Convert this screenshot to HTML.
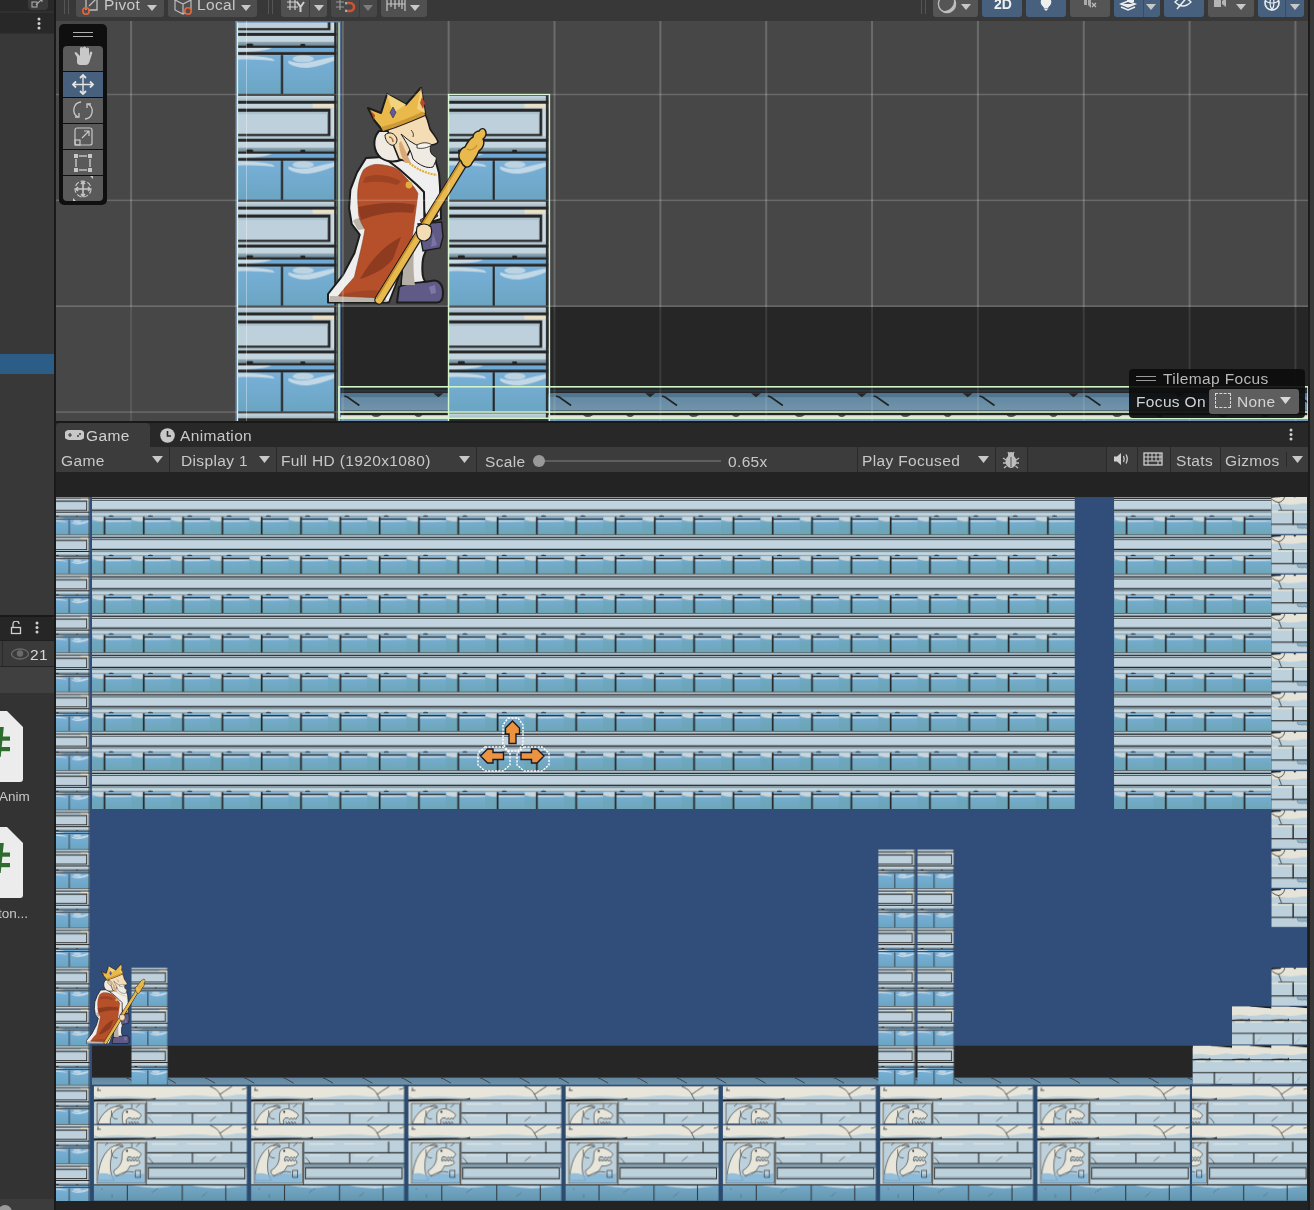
<!DOCTYPE html>
<html><head><meta charset="utf-8"><title>Unity</title>
<style>
html,body{margin:0;padding:0;width:1314px;height:1210px;overflow:hidden;background:#191919;font-family:"Liberation Sans",sans-serif;}
.a{position:absolute;box-sizing:border-box}
.t{position:absolute;color:#c4c4c4;font-size:14px;line-height:16px;white-space:nowrap;will-change:transform}
</style></head><body>

<div class="a" style="left:0;top:0;width:54px;height:1210px;background:#383838"></div>
<div class="a" style="left:0;top:0;width:54px;height:11px;background:#282828"></div>
<div class="a" style="left:28px;top:-4px;width:20px;height:14px;background:#3a3a3a;border-radius:0 0 4px 4px"></div>
<div class="a" style="left:0;top:11px;width:54px;height:2px;background:#303030"></div>
<div class="a" style="left:0;top:13px;width:54px;height:21px;background:#282828"></div>
<div class="a" style="left:0;top:33px;width:54px;height:1px;background:#2f2f2f"></div>
<div class="a" style="left:0;top:354px;width:54px;height:20px;background:#2c5d87"></div>
<div class="a" style="left:0;top:615px;width:54px;height:2px;background:#191919"></div>
<div class="a" style="left:0;top:617px;width:54px;height:23.5px;background:#262626;border-radius:0 4px 0 0"></div>
<div class="a" style="left:0;top:640px;width:54px;height:1px;background:#1f1f1f"></div>
<div class="a" style="left:0;top:641px;width:54px;height:25px;background:#3a3a3a"></div>
<div class="a" style="left:2px;top:641px;width:1px;height:25px;background:#2a2a2a"></div>
<div class="a" style="left:0;top:666px;width:54px;height:1px;background:#252525"></div>
<div class="a" style="left:0;top:667px;width:54px;height:26px;background:#404040"></div>
<div class="a" style="left:0;top:693px;width:54px;height:506px;background:#333333"></div>
<div class="a" style="left:0;top:1199px;width:54px;height:11px;background:#3c3c3c"></div>
<div class="a" style="left:54px;top:0;width:2px;height:1210px;background:#1a1a1a"></div>
<div class="a" style="left:56px;top:0;width:1258px;height:21px;background:#383838"></div>
<div class="a" style="left:56px;top:421px;width:1258px;height:2px;background:#191919"></div>
<div class="a" style="left:56px;top:423px;width:1258px;height:24px;background:#282828"></div>
<div class="a" style="left:56px;top:423px;width:94px;height:24px;background:#3c3c3c;border-radius:4px 4px 0 0"></div>
<div class="a" style="left:56px;top:447px;width:1258px;height:25px;background:#3c3c3c"></div>
<div class="a" style="left:56px;top:472px;width:1258px;height:25px;background:#232323"></div>
<div class="a" style="left:56px;top:1201px;width:1258px;height:9px;background:#232323"></div>
<div class="a" style="left:1307px;top:497px;width:7px;height:704px;background:#232323"></div>
<svg class="a" style="left:0;top:0" width="1314" height="1210">
<defs><linearGradient id="floorB" x1="0" y1="0" x2="0" y2="1"><stop offset="0" stop-color="#74a8c8"/><stop offset="1" stop-color="#6497ae"/></linearGradient>
<linearGradient id="ledgeG" x1="0" y1="0" x2="0" y2="1"><stop offset="0" stop-color="#c6d8e1"/><stop offset="1" stop-color="#a3b8c4"/></linearGradient>
<linearGradient id="grayG" x1="0" y1="0" x2="0" y2="1"><stop offset="0" stop-color="#93a9b5"/><stop offset="1" stop-color="#6e8b9c"/></linearGradient>
<linearGradient id="brickW" x1="0" y1="0" x2="0" y2="1"><stop offset="0" stop-color="#74acd0"/><stop offset="1" stop-color="#6ea6b6"/></linearGradient>
<linearGradient id="brickG" x1="0" y1="0" x2="0" y2="1"><stop offset="0" stop-color="#78b0d9"/><stop offset="1" stop-color="#6ba5c2"/></linearGradient>
<pattern id="colG" patternUnits="userSpaceOnUse" x="92.0" y="495.0" width="39.31" height="39.31">
<rect x="0" y="0" width="36.8" height="39.31" fill="#bccfda"/>
<rect x="0" y="0" width="36.8" height="0.75" fill="#262626"/>
<rect x="0" y="0.75" width="36.8" height="1.9" fill="url(#ledgeG)"/>
<rect x="0" y="2.6" width="36.8" height="1.1" fill="#262626"/>
<rect x="0" y="3.7" width="36.8" height="1.8" fill="#c2d4de"/>
<rect x="28" y="3.7" width="8" height="1.6" fill="#e9e1c7"/>
<rect x="0" y="5.5" width="34.7" height="10.3" fill="#262626"/>
<rect x="0" y="6.7" width="33.6" height="8.2" fill="#bdd0dc"/>
<rect x="0" y="6.7" width="33.6" height="0.8" fill="#a9bfcb"/>
<rect x="34.7" y="5.5" width="1.5" height="10.3" fill="#c9dae3"/>
<rect x="0" y="15.8" width="36.8" height="0.9" fill="#b4c8d3"/>
<rect x="0" y="16.7" width="36.8" height="1.1" fill="#262626"/>
<rect x="0" y="17.8" width="36.8" height="2.2" fill="#c3d5df"/>
<rect x="0" y="20" width="36.8" height="1.6" fill="url(#grayG)"/>
<rect x="0" y="22.2" width="36.8" height="1.6" fill="#6fa9d6"/>
<path d="M0 22.2 h13 q-3 1.6 -13 1.6z" fill="#c8d9e3"/>
<rect x="0" y="21.4" width="36.8" height="0.85" fill="#262626"/>
<rect x="3.3" y="20.7" width="2.6" height="0.9" rx="0.4" fill="#222"/>
<rect x="23.4" y="20.8" width="1.9" height="0.8" rx="0.4" fill="#222"/>
<rect x="0" y="23.8" width="36.8" height="1.1" fill="#262626"/>
<rect x="0" y="24.9" width="36.8" height="14.410000000000004" fill="url(#brickG)"/>
<path d="M0 25 q8 0 13 1.2 l1 1 q-6 -0.8 -14 -0.6z" fill="#c5d8e4"/>
<path d="M19 27 q4 1.5 8 0.5 q4 -1 9 -2 v1.5 q-5 2 -9 2.6 q-5 0.4 -8 -1.6z" fill="#c3d8e6"/>
<ellipse cx="24.5" cy="26.3" rx="4" ry="1.3" fill="#bcd3e2"/>
<rect x="16.2" y="24.9" width="0.8" height="14.410000000000004" fill="#262626"/>
<rect x="36" y="0" width="0.8" height="39.31" fill="#262626"/>
</pattern>
<pattern id="colS" patternUnits="userSpaceOnUse" width="39.31" height="39.31" patternTransform="translate(237.3 93.8) scale(2.6927)">
<rect x="0" y="0" width="36.8" height="39.31" fill="#bccfda"/>
<rect x="0" y="0" width="36.8" height="0.75" fill="#262626"/>
<rect x="0" y="0.75" width="36.8" height="1.9" fill="url(#ledgeG)"/>
<rect x="0" y="2.6" width="36.8" height="1.1" fill="#262626"/>
<rect x="0" y="3.7" width="36.8" height="1.8" fill="#c2d4de"/>
<rect x="28" y="3.7" width="8" height="1.6" fill="#e9e1c7"/>
<rect x="0" y="5.5" width="34.7" height="10.3" fill="#262626"/>
<rect x="0" y="6.7" width="33.6" height="8.2" fill="#bdd0dc"/>
<rect x="0" y="6.7" width="33.6" height="0.8" fill="#a9bfcb"/>
<rect x="34.7" y="5.5" width="1.5" height="10.3" fill="#c9dae3"/>
<rect x="0" y="15.8" width="36.8" height="0.9" fill="#b4c8d3"/>
<rect x="0" y="16.7" width="36.8" height="1.1" fill="#262626"/>
<rect x="0" y="17.8" width="36.8" height="2.2" fill="#c3d5df"/>
<rect x="0" y="20" width="36.8" height="1.6" fill="url(#grayG)"/>
<rect x="0" y="22.2" width="36.8" height="1.6" fill="#6fa9d6"/>
<path d="M0 22.2 h13 q-3 1.6 -13 1.6z" fill="#c8d9e3"/>
<rect x="0" y="21.4" width="36.8" height="0.85" fill="#262626"/>
<rect x="3.3" y="20.7" width="2.6" height="0.9" rx="0.4" fill="#222"/>
<rect x="23.4" y="20.8" width="1.9" height="0.8" rx="0.4" fill="#222"/>
<rect x="0" y="23.8" width="36.8" height="1.1" fill="#262626"/>
<rect x="0" y="24.9" width="36.8" height="14.410000000000004" fill="url(#brickG)"/>
<path d="M0 25 q8 0 13 1.2 l1 1 q-6 -0.8 -14 -0.6z" fill="#c5d8e4"/>
<path d="M19 27 q4 1.5 8 0.5 q4 -1 9 -2 v1.5 q-5 2 -9 2.6 q-5 0.4 -8 -1.6z" fill="#c3d8e6"/>
<ellipse cx="24.5" cy="26.3" rx="4" ry="1.3" fill="#bcd3e2"/>
<rect x="16.2" y="24.9" width="0.8" height="14.410000000000004" fill="#262626"/>
<rect x="36" y="0" width="0.8" height="39.31" fill="#262626"/>
</pattern>
<pattern id="wallG" patternUnits="userSpaceOnUse" x="92.0" y="495.0" width="39.31" height="39.31">
<rect x="0" y="0" width="39.31" height="39.31" fill="#bdd1db"/>
<rect x="0" y="0" width="39.31" height="0.8" fill="#262a2c"/>
<rect x="0" y="0.8" width="39.31" height="1.9" fill="url(#ledgeG)"/>
<rect x="0" y="2.7" width="39.31" height="1.3" fill="#232323"/>
<rect x="0" y="4.0" width="39.31" height="1.0" fill="#c0d3dd"/>
<rect x="0" y="5.0" width="39.31" height="1.0" fill="#3e4c55"/>
<rect x="0" y="6.0" width="39.31" height="8.5" fill="#c0d3de"/>
<rect x="0" y="6.0" width="39.31" height="1.0" fill="#c8dae4"/>
<rect x="0" y="14.5" width="39.31" height="1.5" fill="#272a2c"/>
<rect x="0" y="16.0" width="39.31" height="1.2" fill="#8aa0ad"/>
<rect x="0" y="17.2" width="39.31" height="0.8" fill="#5f7580"/>
<rect x="0" y="18.0" width="39.31" height="2.6" fill="#c3d6e0"/>
<rect x="0" y="20.6" width="39.31" height="1.3" fill="#8ea3ae"/>
<path d="M16.7 21.4 q2 -1.5 4.9 0 z" fill="#222" stroke="#222" stroke-width="0.6"/>
<rect x="0" y="21.9" width="39.31" height="5.1" fill="#79afd6"/>
<path d="M0.5 21.9 h11.5 v4.5 q-5 1 -11.5 -1.5z" fill="#c9d6dc"/>
<rect x="12.4" y="23.6" width="26.910000000000004" height="1.4" fill="#262626"/>
<path d="M13 25 h26.310000000000002 v1 q-12 1.2 -26.310000000000002 1.2z" fill="#c5dbe8"/>
<rect x="0" y="27" width="39.31" height="12.310000000000002" fill="url(#brickW)"/>
<rect x="0" y="26.4" width="12" height="12.910000000000004" fill="#6aa4b4" opacity="0.55"/>
<rect x="11.6" y="21.9" width="1.7" height="17.410000000000004" fill="#262626"/>
</pattern>
<pattern id="snowG" patternUnits="userSpaceOnUse" x="92.0" y="495.0" width="39.31" height="39.31">
<rect x="0" y="0" width="37" height="39.31" fill="#bdd1dc"/>
<rect x="0" y="0" width="37" height="1.1" fill="#2c4a70"/>
<path d="M0 1.1 h37 v7.5 q-6 -1 -10 0.6 q-8 1 -14 -0.2 q-7 -0.5 -13 0.4z" fill="#e6e4d8"/>
<path d="M0 1.1 h10 l-1 1.2 q-5 -0.2 -9 0.6z M22 1.1 h3 l-1.5 1.6z" fill="#222"/>
<path d="M0.3 4 q4 3.5 7.1 3.4 q5 -1 6.1 -6.3 M7.4 7.4 L10.3 15" stroke="#222" stroke-width="0.75" fill="none"/>
<path d="M7 15.1 h16 v0.9 h-16z" fill="#222"/>
<rect x="23" y="15.1" width="14" height="0.8" fill="#8fa9b6"/>
<rect x="0" y="15.9" width="37" height="1.8" fill="#dde0d8"/>
<rect x="21.1" y="15.9" width="1.4" height="13.9" fill="#222"/>
<rect x="0" y="28.7" width="37" height="1.1" fill="#262626"/>
<path d="M26 29.8 h11 v3 q-2 1.5 -4 0 q-2 1.6 -4 0 q-2 1.4 -3 -1z" fill="#8fb3c9" stroke="#333" stroke-width="0.3"/>
<rect x="0" y="39.05" width="37" height="0.26" fill="#2c4a70"/>
</pattern>
<pattern id="stairG" patternUnits="userSpaceOnUse" x="92.0" y="495.0" width="39.31" height="39.31">
<rect x="0" y="0" width="39.31" height="39.31" fill="#bdd1dc"/>
<path d="M0 0 h39.31 v8.6 q-6 -1.2 -12 0.6 q-8 1.5 -14 -0.2 q-7 -1 -13.310000000000002 0.4z" fill="#e6e4d8"/>
<path d="M18 0 L39.31 0 L39.31 2.6 L38 2.2 Q30 1.4 18 0.4 Z" fill="#1e1e1e"/>
<path d="M0 13.8 q8 -0.8 16 -0.2 l1.5 -1.4 l0.3 1.7 h21.51 v1.2 h-39.31 z" fill="#222"/>
<path d="M3 15.3 h10 v1.4 q-5 0.5 -10 0z M18 15.3 h12 v1.2 q-6 0.5 -12 0z" fill="#e2e2d8"/>
<rect x="0" y="26.8" width="39.31" height="1.0" fill="#262626"/>
<rect x="21.1" y="26.8" width="1.2" height="11.7" fill="#262626"/>
<path d="M24 37 l5 -5" stroke="#333" stroke-width="0.45" stroke-dasharray="1 1"/>
<rect x="0" y="38.5" width="39.31" height="0.81" fill="#2c4a70"/>
</pattern>
<pattern id="floorG" patternUnits="userSpaceOnUse" x="92.0" y="1084.4" width="157.24" height="130">
<rect x="0" y="0" width="157.24" height="120" fill="#2c4a6e"/>
<rect x="1.3" y="1.9" width="154" height="114.3" fill="#bdd1dc"/>
<g id="fRowA">
<path d="M1.3 1.9 h154 v8.5 q-8 -1.2 -16 0.8 q-12 2 -26 0.2 q-16 -1.6 -32 1 q-18 2.2 -36 0.2 q-14 -1.2 -26 -0.6 q-10 0.8 -18 2.4z" fill="#e8e6da"/>
<path d="M1.3 12.5 q4 1 8 3" stroke="#9ab8cc" stroke-width="1" fill="none"/>
<path d="M1.3 15.4 h154 v1.2 h-154z" fill="#262626"/>
<path d="M1.3 15 q30 -0.8 50 -0.3 q10 0.2 12 -1.2 l0.5 1.6 q-30 1.8 -62.5 2.2z" fill="#1e1e1e"/>
<path d="M118 2 q8 3 10 8 q2 4 3 5.6 M128 10 q4 -3 12 -8 M150 5 q3 0 5 -2" stroke="#222" stroke-width="0.7" fill="none"/>
<path d="M6 3 v3 M5 6 h4" stroke="#222" stroke-width="0.7"/>
</g>
<use href="#fRowA" y="38.9"/>
<!-- row A stones -->
<rect x="3.4" y="17.4" width="51.2" height="22.5" fill="#dcdcd2"/>
<rect x="5" y="19" width="48" height="21" fill="#bdd1dc" stroke="#2a2a2a" stroke-width="0.6"/>
<path d="M6 39.6 C8 32 14 25 22 22.5 C26 21.5 29 22 31 23.5 C26 23.5 22 26 20 30 C18 34 18 37 18.5 39.6 Z" fill="#e8e6da" stroke="#222" stroke-width="0.6"/>
<path d="M19.5 26 C19 32 21 35 25.5 34.5 M24 22 C28 20 30 21 31.5 22.5" stroke="#222" stroke-width="0.6" fill="none"/>
<path d="M31 27.5 C33 25 36 24.2 39 24.5 C42 25 45 26.5 48.5 29.5 C49.5 31 49 32.5 47.5 33 L46.5 35 L45 33.3 L43.5 35.2 L42 33.4 L40.5 35.2 L39 33.5 L36 33.5 L34 36 L34.5 39.6 L31 39.6 C30 35 30 31 31 27.5 Z" fill="#e8e6da" stroke="#222" stroke-width="0.6"/>
<path d="M36.5 37 L38 39.6 L39.5 37.2 L41 39.6 L42.5 37.2 L44 39.6 L45.5 37.4 L47 39.6" stroke="#222" stroke-width="0.6" fill="#e8e6da"/>
<circle cx="35" cy="27.5" r="1" fill="#222"/>
<path d="M39.8 19.5 V24 M44 23 L48 19.5 M13 22 L16 19.5" stroke="#222" stroke-width="0.6"/>
<path d="M56 33 q3 2 5 6" stroke="#222" stroke-width="0.6" fill="none"/>
<rect x="55" y="28" width="100.3" height="1.2" fill="#262626"/>
<rect x="138.8" y="17.4" width="1.1" height="10.6" fill="#262626"/>
<rect x="99.9" y="29.2" width="1.1" height="10.4" fill="#262626"/>
<rect x="54" y="17.4" width="1" height="22.2" fill="#333"/>
<path d="M60 19 h25 v1.2 h-25z M95 19 h30 v1 h-30z M60 30.5 h20 v1 h-20z M105 30.5 h25 v1 h-25z" fill="#dfe6e4"/>
<path d="M118 37 l6 -5" stroke="#222" stroke-width="0.5" fill="none"/>
<rect x="0" y="39.6" width="157.24" height="1.2" fill="#2c4a6e"/>
<!-- row B stones -->
<rect x="3.4" y="56.5" width="51.2" height="44" fill="#dcdcd2"/>
<rect x="5" y="58.2" width="48" height="40.6" fill="#bdd1dc" stroke="#2a2a2a" stroke-width="0.6"/>
<path d="M6 96 C6 80 12 66 22 61.5 C26 60.5 29 61 31 62.5 C26 62.5 21 66 19.5 72 C17.5 80 18 90 22 96 Z" fill="#e8e6da" stroke="#222" stroke-width="0.6"/>
<path d="M19.5 65 C19 71 21 74 25.5 73.5 M24 61 C28 59 30 60 31.5 61.5" stroke="#222" stroke-width="0.6" fill="none"/>
<path d="M31 66.5 C33 64 36 63.2 39 63.5 C42 64 45 65.5 48.5 68.5 C49.5 70 49 71.5 47.5 72 L46.5 74 L45 72.3 L43.5 74.2 L42 72.4 L40.5 74.2 L39 72.5 L36 72.5 L35 76 L36 77 L37.5 75 L39 77 L40.5 75 L42 77 L43.5 75 L45 77 L46.5 75.5 L48 78.5 C46 81 42 82 38 81.5 C36 86 32 90 28 91 C24 92 21 90 22 86 C26 84 29 80 30 75 C30 72 30 69 31 66.5 Z" fill="#e8e6da" stroke="#222" stroke-width="0.6"/>
<circle cx="35" cy="66.5" r="1" fill="#222"/>
<path d="M39.8 58.5 V63 M44 62 L48 58.5 M13 61 L16 58.5" stroke="#222" stroke-width="0.6"/>
<path d="M5.5 90 C14 86 22 94 30 90 C38 87 44 92 52.5 89 V98.5 H5.5 Z" fill="#7fb4d8" opacity="0.8"/>
<path d="M24 92 C30 88 36 86 42 88" stroke="#222" stroke-width="0.6" fill="none"/>
<rect x="43.5" y="86" width="5" height="7" fill="none" stroke="#222" stroke-width="0.6"/>
<path d="M56 73 q3 2 5 6" stroke="#222" stroke-width="0.6" fill="none"/>
<rect x="55" y="67.8" width="100.3" height="1.2" fill="#262626"/>
<rect x="138.8" y="57.2" width="1.1" height="10.6" fill="#262626"/>
<rect x="99.9" y="69" width="1.1" height="9.6" fill="#262626"/>
<rect x="54" y="57.2" width="1" height="43" fill="#333"/>
<path d="M60 59 h25 v1.2 h-25z M95 59 h30 v1 h-30z M60 70.5 h20 v1 h-20z M105 70.5 h25 v1 h-25z" fill="#dfe6e4"/>
<path d="M118 77 l6 -5" stroke="#222" stroke-width="0.5" fill="none"/>
<rect x="55" y="78.6" width="100.3" height="1.2" fill="#262626"/>
<rect x="55" y="79.8" width="100.3" height="3.8" fill="url(#grayG)"/>
<rect x="56.4" y="83.6" width="96.3" height="11" fill="#bdd1dc" stroke="#262626" stroke-width="0.9"/>
<rect x="57" y="92.5" width="95" height="1.6" fill="#8ea4b0"/>
<rect x="55" y="95.5" width="100.3" height="4.4" fill="#c4d6df"/>
<rect x="1.3" y="99.9" width="154" height="1.2" fill="#262626"/>
<rect x="1.3" y="101.1" width="154" height="15.1" fill="url(#floorB)"/>
<path d="M40 101.1 q20 4 40 1 v-0 z M100 101.1 q20 5 50 1z" fill="#c5d9e6"/>
<path d="M35.3 101.1 v15 M90.3 101.1 v15 M133.8 101.1 v15" stroke="#262626" stroke-width="0.9"/>
<path d="M10 104 v2 M20 110 v3 M60 108 l6 -4 M110 112 l5 -4" stroke="#222" stroke-width="0.5" stroke-dasharray="1 1"/>
<rect x="0" y="0" width="1.9" height="120" fill="#2c4a6e"/>
<rect x="154.8" y="0" width="2.5" height="120" fill="#2c4a6e"/>
</pattern>
<pattern id="floorG2" href="#floorG" patternUnits="userSpaceOnUse" x="52.69" y="1084.4" width="157.24" height="130"></pattern>
<linearGradient id="iceG" x1="0" y1="0" x2="0" y2="1"><stop offset="0" stop-color="#5f86a3"/><stop offset="1" stop-color="#7294a9"/></linearGradient>
<symbol id="king" viewBox="0 0 160 218">
<g stroke="#1c1c1c" stroke-width="2" stroke-linejoin="round">
<!-- legs -->
<path d="M78 148 L101 150 L101 160 C96 168 95 174 95.4 184 C95.4 190 97 194 100 196 L74 200 Z" fill="#ececec"/>
<!-- shoes -->
<path d="M72 200 C80 195 95 196 104 194 C112 192 116 198 116 206 C116 212 114 215.5 110 215.5 L70 215.5 Z" fill="#5f5a86"/>
<!-- chest -->
<path d="M56 68 L84 62 L108 72 L112 86 L113 100 L114 132 L100 136 L96 120 L90 106 L72 84 Z" fill="#efefef"/>
<!-- back fur base -->
<path d="M39 71 L30 85.5 L23.4 102.7 L22.1 121.2 L24.7 137 L32.7 147.7 L27.4 166.2 L15.5 188.7 L1 207 L1 215.5 L62 215.5 L68 200 L86 150 L97.5 142 L97 105 L90 98 L72 82 L56 70 Z" fill="#eeeeee"/>
</g>
<path d="M3 209 L58 210 L60 215 L2 215 Z" fill="#bdb6ac"/>
<path d="M26 134 C30 130 36 131 40 134 L38 142 L31 143 Z" fill="#bdb6ac"/>
<path d="M75 198 L79 150 L88 150 C86 170 86 186 88 198 Z" fill="#b5aea4"/>
<!-- red cape -->
<path d="M36.6 82.8 C42 78 48 77 51.2 77.5 C60 78 68 80 72.4 84 C80 92 88 100 90.9 106.6 L85.6 147.7 C76 172 66 194 57 211 L11.5 209 C18 200 24 194 27.4 190 C32 170 36 155 38 142.4 C34 136 31 130 31.4 122.5 C30 108 30 95 36.6 82.8 Z" fill="#b5502b" stroke="#8a3a1e" stroke-width="0.6"/>
<path d="M31 120 C50 116 70 114 88 118 L86 126 C70 124 52 126 34 133 Z" fill="#8e3b20"/>
<path d="M33 192 C44 172 58 158 74 150 L66 172 C58 182 46 188 33 192 Z" fill="#8e3b20"/>
<path d="M38 90 C50 86 62 88 74 94 L70 98 C58 94 48 94 36 96 Z" fill="#8e3b20" opacity="0.6"/>
<path d="M12 208 C28 204 44 202 58 204 L57 211 L11.5 209 Z" fill="#8e3b20" opacity="0.5"/>
<!-- purple skirt -->
<path d="M91 137 L114.7 135 L116 150 L113 161 L96 164 Z" fill="#5f5a86" stroke="#1c1c1c" stroke-width="1.4"/>
<path d="M106 146 L110 158 L104 160 Z" fill="#7a74a6"/>
<!-- sash -->
<path d="M93 133 L108 124 L111 129 L96 139 Z" fill="#b5502b" stroke="#1c1c1c" stroke-width="0.8"/>
<path d="M102 200 L108 198 L109 206 L104 207 Z" fill="#7d78aa"/>
<!-- chain & clasp -->
<path d="M78 72 C86 80 96 86 110 88" stroke="#e2ac3a" stroke-width="2.2" fill="none" stroke-dasharray="2 1"/>
<circle cx="82" cy="98" r="3.4" fill="#e4ad3c"/>
<!-- beard & hair -->
<path d="M52 44 C45 52 46 64 54 71 C60 75 68 75 74 73 L72 60 L62 44 Z" fill="#efebe3" stroke="#1c1c1c" stroke-width="2"/>
<!-- face -->
<path d="M60 42 L98 27 C101 33 102 38 103 42 C106 47 110 51 111 55 C110 57 106 58 104 58 L102 60 C96 62 90 60 86 58 C82 64 80 70 78 74 L72 72 C68 62 64 52 60 42 Z" fill="#f4dcb5" stroke="#1c1c1c" stroke-width="1.6"/>
<path d="M74 54 C78 62 80 68 84 76 L78 76 C74 70 72 62 72 56 Z" fill="#d9a877"/>
<path d="M74 47 C80 56 84 64 86 72 C92 78 100 82 106 80 C108 76 110 72 109 70 C104 68 102 64 104 58 C98 60 92 60 86 56 C82 54 78 50 74 47 Z" fill="#efebe3" stroke="#1c1c1c" stroke-width="1"/>
<!-- ear -->
<path d="M58 48 C62 44 68 46 70 52 C70 57 67 59 64 58 C60 56 58 52 58 48 Z" fill="#f4dcb5" stroke="#1c1c1c" stroke-width="1"/>
<path d="M62 50 C64 50 66 52 66 55" stroke="#a5643a" stroke-width="1.5" fill="none"/>
<path d="M84 43 C86 45 87 47 86 50" stroke="#1c1c1c" stroke-width="0.8" fill="none"/>
<!-- moustache -->
<path d="M90 58 C95 55 101 55 105 58 C100 61 95 62 90 61 Z" fill="#f4f2ec" stroke="#1c1c1c" stroke-width="0.8"/>
<!-- crown -->
<path d="M41 21 L54 26 L60 7 L79 17.5 L94 0.5 L98 26 L98 28 C84 34 70 40 56 44 L47 33 Z" fill="#e9b94b" stroke="#1c1c1c" stroke-width="2" stroke-linejoin="round"/>
<path d="M56 44 C70 40 84 34 98 28 L97 24 C84 30 70 36 54 40 Z" fill="#cf9a35"/>
<path d="M60 7 L66 26 L79 17.5 Z M94 0.5 L90 22 L98 26Z" fill="#f3d27e"/>
<path d="M66 20 L69 25.5 L66 31 L63 25.5 Z" fill="#5f5a9a" stroke="#2a2a50" stroke-width="0.6"/>
<path d="M95 10 L98 16 L96 22 L93 16 Z" fill="#b84a2a"/>
<path d="M44 24 L48 28 L47 33 Z" fill="#b84a2a"/>
<!-- staff -->
<path d="M52 213 L140 70" stroke="#1c1c1c" stroke-width="9.5" stroke-linecap="round"/>
<path d="M52 213 L140 70" stroke="#e8b94c" stroke-width="7" stroke-linecap="round"/>
<path d="M49.5 211.5 L137.5 68.5" stroke="#c8902c" stroke-width="1.6"/>
<path d="M134 74 C130 70 132 62 138 60 C140 56 142 52 146 50 C146 46 150 44 152 44 C154 41 157 41 158 43 C160 46 159 50 156 52 C158 56 156 62 152 64 C150 70 146 74 144 78 C140 82 136 80 134 74 Z" fill="#e8b94c" stroke="#1c1c1c" stroke-width="1.4"/>
<path d="M140 62 C144 64 148 62 150 58" stroke="#c8902c" stroke-width="1.2" fill="none"/>
<!-- hand -->
<path d="M90 140 C94 136 100 136 104 140 C106 146 104 152 98 154 C92 154 88 150 90 140 Z" fill="#f4dcb5" stroke="#1c1c1c" stroke-width="1.2"/>
</symbol>

</defs>
<clipPath id="scClip"><rect x="56" y="21" width="1258" height="400"/></clipPath>
<g clip-path="url(#scClip)">
<rect x="56" y="21" width="1258" height="400" fill="#474747"/>
<rect x="339" y="306.8" width="975" height="116" fill="#262626"/>
<rect x="339" y="390.5" width="975" height="0.8" fill="#2e4a60"/>
<rect x="339" y="393.3" width="975" height="17.5" fill="url(#iceG)"/>
<rect x="339" y="393.3" width="975" height="3.8" fill="#52768f"/>
<rect x="339" y="410.8" width="975" height="4.4" fill="#262626"/>
<rect x="339" y="415.2" width="975" height="3.1" fill="#e6e4d8"/>
<rect x="339" y="418.3" width="975" height="3" fill="#6f8fb8"/>
<path d="M344.4 396 l3 1 l12 8.5" stroke="#222" stroke-width="1.6" fill="none"/>
<path d="M433.4 393.3 l5 4 l5 -4z" fill="#262626"/>
<path d="M371.4 415.2 q4 3 10 0z M414.4 415.2 q4 3 8 0z" fill="#262626"/>
<path d="M450.3 396 l3 1 l12 8.5" stroke="#222" stroke-width="1.6" fill="none"/>
<path d="M539.3 393.3 l5 4 l5 -4z" fill="#262626"/>
<path d="M477.3 415.2 q4 3 10 0z M520.3 415.2 q4 3 8 0z" fill="#262626"/>
<path d="M556.1 396 l3 1 l12 8.5" stroke="#222" stroke-width="1.6" fill="none"/>
<path d="M645.1 393.3 l5 4 l5 -4z" fill="#262626"/>
<path d="M583.1 415.2 q4 3 10 0z M626.1 415.2 q4 3 8 0z" fill="#262626"/>
<path d="M662.0 396 l3 1 l12 8.5" stroke="#222" stroke-width="1.6" fill="none"/>
<path d="M751.0 393.3 l5 4 l5 -4z" fill="#262626"/>
<path d="M689.0 415.2 q4 3 10 0z M732.0 415.2 q4 3 8 0z" fill="#262626"/>
<path d="M767.8 396 l3 1 l12 8.5" stroke="#222" stroke-width="1.6" fill="none"/>
<path d="M856.8 393.3 l5 4 l5 -4z" fill="#262626"/>
<path d="M794.8 415.2 q4 3 10 0z M837.8 415.2 q4 3 8 0z" fill="#262626"/>
<path d="M873.7 396 l3 1 l12 8.5" stroke="#222" stroke-width="1.6" fill="none"/>
<path d="M962.7 393.3 l5 4 l5 -4z" fill="#262626"/>
<path d="M900.7 415.2 q4 3 10 0z M943.7 415.2 q4 3 8 0z" fill="#262626"/>
<path d="M979.5 396 l3 1 l12 8.5" stroke="#222" stroke-width="1.6" fill="none"/>
<path d="M1068.5 393.3 l5 4 l5 -4z" fill="#262626"/>
<path d="M1006.5 415.2 q4 3 10 0z M1049.5 415.2 q4 3 8 0z" fill="#262626"/>
<path d="M1085.4 396 l3 1 l12 8.5" stroke="#222" stroke-width="1.6" fill="none"/>
<path d="M1174.4 393.3 l5 4 l5 -4z" fill="#262626"/>
<path d="M1112.4 415.2 q4 3 10 0z M1155.4 415.2 q4 3 8 0z" fill="#262626"/>
<path d="M1191.2 396 l3 1 l12 8.5" stroke="#222" stroke-width="1.6" fill="none"/>
<path d="M1280.2 393.3 l5 4 l5 -4z" fill="#262626"/>
<path d="M1218.2 415.2 q4 3 10 0z M1261.2 415.2 q4 3 8 0z" fill="#262626"/>
<path d="M1297.1 396 l3 1 l12 8.5" stroke="#222" stroke-width="1.6" fill="none"/>
<path d="M1386.1 393.3 l5 4 l5 -4z" fill="#262626"/>
<path d="M1324.1 415.2 q4 3 10 0z M1367.1 415.2 q4 3 8 0z" fill="#262626"/>
<rect x="237.3" y="21" width="102" height="400" fill="url(#colS)"/>
<rect x="449" y="94.5" width="102" height="327" fill="url(#colS)"/>
<rect x="236" y="19" width="104" height="405" fill="none" stroke="#5a7bb0" stroke-width="1.5"/>
<rect x="237.5" y="19" width="101.5" height="405" fill="none" stroke="#d0f5c8" stroke-width="1.3"/>
<rect x="235" y="21" width="105" height="1.5" fill="#5a7bb0"/>
<rect x="448.5" y="94.5" width="101" height="330" fill="none" stroke="#d0f5c8" stroke-width="1.3"/>
<rect x="339" y="386.8" width="969" height="31.5" fill="none" stroke="#d0f5c8" stroke-width="1.6"/>
<rect x="339" y="411.2" width="969" height="1.6" fill="#d0f5c8"/>
<rect x="246" y="21" width="1" height="400" fill="#fff" opacity="0.35"/>
<use href="#king" x="327" y="87" width="160" height="218"/>
<rect x="130.10" y="21" width="2" height="285.5" fill="#fff" opacity="0.2"/>
<rect x="130.10" y="306.5" width="2" height="115" fill="#fff" opacity="0.1"/>
<rect x="235.95" y="21" width="2" height="285.5" fill="#fff" opacity="0.2"/>
<rect x="235.95" y="306.5" width="2" height="115" fill="#fff" opacity="0.1"/>
<rect x="341.80" y="21" width="2" height="285.5" fill="#fff" opacity="0.2"/>
<rect x="341.80" y="306.5" width="2" height="115" fill="#fff" opacity="0.1"/>
<rect x="447.65" y="21" width="2" height="285.5" fill="#fff" opacity="0.2"/>
<rect x="447.65" y="306.5" width="2" height="115" fill="#fff" opacity="0.1"/>
<rect x="553.50" y="21" width="2" height="285.5" fill="#fff" opacity="0.2"/>
<rect x="553.50" y="306.5" width="2" height="115" fill="#fff" opacity="0.1"/>
<rect x="659.35" y="21" width="2" height="285.5" fill="#fff" opacity="0.2"/>
<rect x="659.35" y="306.5" width="2" height="115" fill="#fff" opacity="0.1"/>
<rect x="765.20" y="21" width="2" height="285.5" fill="#fff" opacity="0.2"/>
<rect x="765.20" y="306.5" width="2" height="115" fill="#fff" opacity="0.1"/>
<rect x="871.05" y="21" width="2" height="285.5" fill="#fff" opacity="0.2"/>
<rect x="871.05" y="306.5" width="2" height="115" fill="#fff" opacity="0.1"/>
<rect x="976.90" y="21" width="2" height="285.5" fill="#fff" opacity="0.2"/>
<rect x="976.90" y="306.5" width="2" height="115" fill="#fff" opacity="0.1"/>
<rect x="1082.75" y="21" width="2" height="285.5" fill="#fff" opacity="0.2"/>
<rect x="1082.75" y="306.5" width="2" height="115" fill="#fff" opacity="0.1"/>
<rect x="1188.60" y="21" width="2" height="285.5" fill="#fff" opacity="0.2"/>
<rect x="1188.60" y="306.5" width="2" height="115" fill="#fff" opacity="0.1"/>
<rect x="1294.45" y="21" width="2" height="285.5" fill="#fff" opacity="0.2"/>
<rect x="1294.45" y="306.5" width="2" height="115" fill="#fff" opacity="0.1"/>
<rect x="56" y="93.75" width="1258" height="1.5" fill="#fff" opacity="0.19"/>
<rect x="56" y="199.60" width="1258" height="1.5" fill="#fff" opacity="0.19"/>
<rect x="56" y="305.45" width="1258" height="1.5" fill="#fff" opacity="0.22"/>
<rect x="56" y="411.30" width="283" height="1.5" fill="#fff" opacity="0.19"/>
<rect x="339" y="411.30" width="975" height="1.5" fill="#fff" opacity="0.1"/>
</g>
<clipPath id="gmClip"><rect x="56" y="497" width="1251" height="704"/></clipPath>
<g clip-path="url(#gmClip)">
<rect x="56" y="497" width="1251" height="704" fill="#314d79"/>
<rect x="92.0" y="497" width="982.75" height="312" fill="url(#wallG)"/>
<rect x="1114.06" y="497" width="157.24" height="312" fill="url(#wallG)"/>
<rect x="52" y="497" width="40" height="704" fill="url(#colG)"/>
<rect x="1271.30" y="497" width="37" height="430.41" fill="url(#snowG)"/>
<rect x="92.0" y="1045.7" width="1100.68" height="32" fill="#262626"/>
<rect x="92.0" y="1077.7" width="1100.68" height="7.5" fill="url(#iceG)"/>
<path d="M126.5 1078.2 l2 0.4 l8 4.6" stroke="#333" stroke-width="0.8" fill="none"/>
<path d="M165.8 1078.2 l2 0.4 l8 4.6" stroke="#333" stroke-width="0.8" fill="none"/>
<path d="M205.1 1078.2 l2 0.4 l8 4.6" stroke="#333" stroke-width="0.8" fill="none"/>
<path d="M244.4 1078.2 l2 0.4 l8 4.6" stroke="#333" stroke-width="0.8" fill="none"/>
<path d="M283.7 1078.2 l2 0.4 l8 4.6" stroke="#333" stroke-width="0.8" fill="none"/>
<path d="M323.1 1078.2 l2 0.4 l8 4.6" stroke="#333" stroke-width="0.8" fill="none"/>
<path d="M362.4 1078.2 l2 0.4 l8 4.6" stroke="#333" stroke-width="0.8" fill="none"/>
<path d="M401.7 1078.2 l2 0.4 l8 4.6" stroke="#333" stroke-width="0.8" fill="none"/>
<path d="M441.0 1078.2 l2 0.4 l8 4.6" stroke="#333" stroke-width="0.8" fill="none"/>
<path d="M480.3 1078.2 l2 0.4 l8 4.6" stroke="#333" stroke-width="0.8" fill="none"/>
<path d="M519.6 1078.2 l2 0.4 l8 4.6" stroke="#333" stroke-width="0.8" fill="none"/>
<path d="M558.9 1078.2 l2 0.4 l8 4.6" stroke="#333" stroke-width="0.8" fill="none"/>
<path d="M598.2 1078.2 l2 0.4 l8 4.6" stroke="#333" stroke-width="0.8" fill="none"/>
<path d="M637.5 1078.2 l2 0.4 l8 4.6" stroke="#333" stroke-width="0.8" fill="none"/>
<path d="M676.8 1078.2 l2 0.4 l8 4.6" stroke="#333" stroke-width="0.8" fill="none"/>
<path d="M716.2 1078.2 l2 0.4 l8 4.6" stroke="#333" stroke-width="0.8" fill="none"/>
<path d="M755.5 1078.2 l2 0.4 l8 4.6" stroke="#333" stroke-width="0.8" fill="none"/>
<path d="M794.8 1078.2 l2 0.4 l8 4.6" stroke="#333" stroke-width="0.8" fill="none"/>
<path d="M834.1 1078.2 l2 0.4 l8 4.6" stroke="#333" stroke-width="0.8" fill="none"/>
<path d="M873.4 1078.2 l2 0.4 l8 4.6" stroke="#333" stroke-width="0.8" fill="none"/>
<path d="M912.7 1078.2 l2 0.4 l8 4.6" stroke="#333" stroke-width="0.8" fill="none"/>
<path d="M952.0 1078.2 l2 0.4 l8 4.6" stroke="#333" stroke-width="0.8" fill="none"/>
<path d="M991.3 1078.2 l2 0.4 l8 4.6" stroke="#333" stroke-width="0.8" fill="none"/>
<path d="M1030.6 1078.2 l2 0.4 l8 4.6" stroke="#333" stroke-width="0.8" fill="none"/>
<path d="M1069.9 1078.2 l2 0.4 l8 4.6" stroke="#333" stroke-width="0.8" fill="none"/>
<path d="M1109.2 1078.2 l2 0.4 l8 4.6" stroke="#333" stroke-width="0.8" fill="none"/>
<path d="M1148.6 1078.2 l2 0.4 l8 4.6" stroke="#333" stroke-width="0.8" fill="none"/>
<path d="M1187.9 1078.2 l2 0.4 l8 4.6" stroke="#333" stroke-width="0.8" fill="none"/>
<rect x="92.0" y="1085" width="1222" height="1" fill="#2c4a6e"/>
<rect x="878.20" y="849" width="76.11" height="236" fill="url(#colG)"/>
<rect x="131.31" y="967.4" width="36.8" height="117.6" fill="url(#colG)"/>
<rect x="1192.68" y="1045.7" width="117.93" height="39.4" fill="url(#stairG)"/>
<rect x="1231.99" y="1006.4" width="78.62" height="39.3" fill="url(#stairG)"/>
<rect x="1271.30" y="967.1" width="39.31" height="39.3" fill="url(#snowG)"/>
<rect x="90.70" y="1084.4" width="1101.30" height="118" fill="url(#floorG)"/>
<rect x="1192.0" y="1084.4" width="120" height="118" fill="url(#floorG2)"/>
<rect x="1190.0" y="1084.4" width="2" height="118" fill="#2c4a6e"/>
<use href="#king" x="86.2" y="963.7" width="59.3" height="80.8"/>
</g>
</svg>
<!-- ===== scene toolbar ===== -->
<div class="a" style="left:64px;top:0;width:1px;height:14px;background:#555"></div>
<div class="a" style="left:68px;top:0;width:1px;height:14px;background:#555"></div>
<div class="a" style="left:76px;top:-4px;width:88px;height:21px;background:#4e4e4e;border-radius:3px"></div>
<svg class="a" style="left:80px;top:-2px" width="20" height="18"><path d="M6 0 V12 M8 12 H17 V-2 M9 8 L17 0" stroke="#bdbdbd" stroke-width="1.3" fill="none"/><circle cx="6" cy="13" r="3.2" fill="none" stroke="#e8643a" stroke-width="1.6"/></svg>
<div class="t" style="left:104px;top:-3px;font-size:15.5px;letter-spacing:0.35px;color:#c8c8c8">Pivot</div>
<svg class="a" style="left:146px;top:4px" width="12" height="8"><path d="M1 1 H11 L6 7z" fill="#c8c8c8"/></svg>
<div class="a" style="left:168px;top:-4px;width:89px;height:21px;background:#4e4e4e;border-radius:3px"></div>
<svg class="a" style="left:173px;top:-2px" width="22" height="19"><path d="M2 2 L10 -2 L18 2 V12 L10 16 L2 12Z M2 2 L10 6 L18 2 M10 6 V16" stroke="#bdbdbd" stroke-width="1.2" fill="none"/><circle cx="15" cy="13" r="3.2" fill="#4e4e4e" stroke="#e8643a" stroke-width="1.6"/></svg>
<div class="t" style="left:197px;top:-3px;font-size:15.5px;letter-spacing:0.35px;color:#c8c8c8">Local</div>
<svg class="a" style="left:240px;top:4px" width="12" height="8"><path d="M1 1 H11 L6 7z" fill="#c8c8c8"/></svg>
<div class="a" style="left:268px;top:0;width:1px;height:14px;background:#555"></div>
<div class="a" style="left:272px;top:0;width:1px;height:14px;background:#555"></div>
<div class="a" style="left:281px;top:-4px;width:46px;height:21px;background:#505050;border-radius:3px"></div>
<div class="a" style="left:309px;top:-4px;width:1px;height:21px;background:#3a3a3a"></div>
<svg class="a" style="left:286px;top:-2px" width="22" height="17"><path d="M4 -1 V12 M9 -1 V12 M1 4 H12 M1 9 H12" stroke="#cfcfcf" stroke-width="1.2"/><path d="M11 4 L14.5 9 L18 4 M14.5 9 V14" stroke="#cfcfcf" stroke-width="2" fill="none"/></svg>
<svg class="a" style="left:313px;top:4px" width="12" height="8"><path d="M1 1 H11 L6 7z" fill="#c8c8c8"/></svg>
<div class="a" style="left:331px;top:-4px;width:46px;height:21px;background:#474747;border-radius:3px"></div>
<div class="a" style="left:359px;top:-4px;width:1px;height:21px;background:#3a3a3a"></div>
<svg class="a" style="left:335px;top:-2px" width="22" height="17"><path d="M5 -1 V12 M1 4 H9 M1 9 H9" stroke="#9a9a9a" stroke-width="1.2"/><path d="M12 5 H15 A4 4 0 0 1 15 13 H12" stroke="#d0532e" stroke-width="2.6" fill="none"/><rect x="10" y="4" width="2" height="2.4" fill="#aaa"/><rect x="10" y="11.6" width="2" height="2.4" fill="#aaa"/></svg>
<svg class="a" style="left:362px;top:4px" width="12" height="8"><path d="M1 1 H11 L6 7z" fill="#7d7d7d"/></svg>
<div class="a" style="left:381px;top:-4px;width:46px;height:21px;background:#505050;border-radius:3px"></div>
<svg class="a" style="left:385px;top:-2px" width="22" height="15"><path d="M2 0 V13 M20 0 V13 M2 6 H20 M6 0 V9 M10 0 V11 M14 0 V9 M17 0 V11" stroke="#c8c8c8" stroke-width="1.2"/></svg>
<svg class="a" style="left:409px;top:4px" width="12" height="8"><path d="M1 1 H11 L6 7z" fill="#c8c8c8"/></svg>

<div class="a" style="left:921px;top:0;width:1px;height:14px;background:#555"></div>
<div class="a" style="left:925px;top:0;width:1px;height:14px;background:#555"></div>
<div class="a" style="left:933px;top:-4px;width:45px;height:21px;background:#555;border-radius:3px"></div>
<svg class="a" style="left:936px;top:-6px" width="22" height="20"><circle cx="11" cy="10" r="8.6" fill="none" stroke="#bdbdbd" stroke-width="1.3"/><path d="M17.1 3.9 A8.6 8.6 0 0 1 4.9 16.1 A9.3 9.3 0 0 0 17.1 3.9z" fill="#bdbdbd"/></svg>
<svg class="a" style="left:960px;top:3px" width="12" height="8"><path d="M1 1 H11 L6 7z" fill="#c8c8c8"/></svg>
<div class="a" style="left:982px;top:-4px;width:40px;height:21px;background:#46607e;border-radius:3px"></div>
<div class="t" style="left:994px;top:-4px;font-size:14px;font-weight:bold;color:#f0f0f0">2D</div>
<div class="a" style="left:1026px;top:-4px;width:40px;height:21px;background:#46607e;border-radius:3px"></div>
<svg class="a" style="left:1038px;top:-4px" width="16" height="16"><circle cx="8" cy="6" r="5.3" fill="#eee"/><path d="M4.5 9 H11.5 L10 12 H6z" fill="#eee"/><path d="M5.5 12.5 H10.5 L8 15z" fill="#eee"/></svg>
<div class="a" style="left:1070px;top:-4px;width:40px;height:21px;background:#555;border-radius:3px"></div>
<svg class="a" style="left:1082px;top:-2px" width="18" height="14"><path d="M2 0 H5 V7 H2z M6 0 L9 -3 V10 L6 7z" fill="#aaa"/><path d="M10 5 L14 9 M14 5 L10 9" stroke="#bbb" stroke-width="1.3"/></svg>
<div class="a" style="left:1114px;top:-4px;width:46px;height:21px;background:#46607e;border-radius:3px"></div>
<div class="a" style="left:1143px;top:-4px;width:1px;height:21px;background:#3a4c60"></div>
<svg class="a" style="left:1119px;top:-2px" width="20" height="16"><path d="M2 6 L9 3 L16 6 L9 9z M2 9 L9 12 L16 9" stroke="#eee" stroke-width="1.6" fill="none"/><path d="M2 6 L9 9 L16 6" fill="#eee"/><rect x="8" y="-2" width="7" height="6" fill="#eee"/></svg>
<svg class="a" style="left:1145px;top:3px" width="12" height="8"><path d="M1 1 H11 L6 7z" fill="#c8c8c8"/></svg>
<div class="a" style="left:1164px;top:-4px;width:40px;height:21px;background:#46607e;border-radius:3px"></div>
<svg class="a" style="left:1174px;top:-3px" width="20" height="16"><path d="M1 5 Q9 -3 17 5 Q9 13 1 5z" fill="none" stroke="#eee" stroke-width="1.4"/><path d="M3 12 L15 -2" stroke="#eee" stroke-width="1.6"/></svg>
<div class="a" style="left:1208px;top:-4px;width:46px;height:21px;background:#555;border-radius:3px"></div>
<svg class="a" style="left:1213px;top:-2px" width="20" height="12"><rect x="1" y="0" width="7" height="9" fill="#b5b5b5"/><path d="M9 3 L13 0 V9 L9 6z" fill="#b5b5b5"/></svg>
<svg class="a" style="left:1235px;top:3px" width="12" height="8"><path d="M1 1 H11 L6 7z" fill="#c8c8c8"/></svg>
<div class="a" style="left:1258px;top:-4px;width:46px;height:21px;background:#46607e;border-radius:3px"></div>
<div class="a" style="left:1285px;top:-4px;width:1px;height:21px;background:#3a4c60"></div>
<svg class="a" style="left:1263px;top:-3px" width="20" height="17"><circle cx="9" cy="6" r="7" fill="none" stroke="#eee" stroke-width="1.6"/><path d="M2 4 Q9 8 16 4 M9 -1 Q5 6 9 13 M9 -1 Q13 6 9 13" stroke="#eee" stroke-width="1.2" fill="none"/></svg>
<svg class="a" style="left:1289px;top:3px" width="12" height="8"><path d="M1 1 H11 L6 7z" fill="#c8c8c8"/></svg>
<div class="a" style="left:1308px;top:0;width:2px;height:1210px;background:#1c1c1c"></div>
<div class="a" style="left:1310px;top:0;width:4px;height:1210px;background:#393939"></div>

<!-- ===== tool palette ===== -->
<div class="a" style="left:59px;top:24px;width:48px;height:181px;background:#0f0f0f;border-radius:5px"></div>
<div class="a" style="left:73px;top:32px;width:20px;height:1px;background:#b0b0b0"></div>
<div class="a" style="left:73px;top:36px;width:20px;height:1px;background:#b0b0b0"></div>
<div class="a" style="left:63px;top:46px;width:40px;height:25px;background:#5a5a5a;border-radius:4px 4px 0 0"></div>
<div class="a" style="left:63px;top:72px;width:40px;height:25px;background:#46607e"></div>
<div class="a" style="left:63px;top:98px;width:40px;height:25px;background:#5a5a5a"></div>
<div class="a" style="left:63px;top:124px;width:40px;height:25px;background:#5a5a5a"></div>
<div class="a" style="left:63px;top:150px;width:40px;height:25px;background:#5a5a5a"></div>
<div class="a" style="left:63px;top:176px;width:40px;height:25px;background:#5a5a5a;border-radius:0 0 4px 4px"></div>
<svg class="a" style="left:63px;top:46px" width="40" height="155">
<path d="M14 11 L12 8 Q11 6 13 6 L17 10 V3 Q17 1 18.5 1 Q20 1 20 3 V9 V2 Q20 0.5 21.5 0.5 Q23 0.5 23 2 V9 V3 Q23 1.5 24.5 1.5 Q26 1.5 26 3 V10 L27 6 Q28 5 29 6 Q29.5 7 29 8 L26 17 Q25 19 23 19 H17 Q15 19 14 17 Z" fill="#c8c8c8"/>
<g transform="translate(0,26)" stroke="#e4e4e4" stroke-width="1.4" fill="none"><path d="M20 3 V22 M10 12.5 H30"/><path d="M17 6 L20 3 L23 6 M17 19 L20 22 L23 19 M13 9.5 L10 12.5 L13 15.5 M27 9.5 L30 12.5 L27 15.5" stroke-width="1.8"/></g>
<g transform="translate(0,52)" stroke="#c8c8c8" stroke-width="1.3" fill="none"><path d="M18 4 A8 8 0 0 0 15 19 M22 21 A8 8 0 0 0 25 6"/><path d="M12 19 H16 V15 M28 6 H24 V10"/></g>
<g transform="translate(0,78)" stroke="#c8c8c8" stroke-width="1.2" fill="none"><rect x="12" y="4" width="17" height="17" rx="2"/><rect x="12" y="16" width="5" height="5"/><path d="M19 14 L26 7 M21 7 H26 V12"/></g>
<g transform="translate(0,104)" fill="#c8c8c8"><rect x="11" y="4" width="4" height="4"/><rect x="25" y="4" width="4" height="4"/><rect x="11" y="18" width="4" height="4"/><rect x="25" y="18" width="4" height="4"/><rect x="16" y="5.3" width="8" height="1.4"/><rect x="16" y="19.3" width="8" height="1.4"/><rect x="12.3" y="9" width="1.4" height="8"/><rect x="26.3" y="9" width="1.4" height="8"/></g>
<g transform="translate(0,130)" stroke="#c8c8c8" stroke-width="1.1" fill="none"><circle cx="20" cy="13" r="8" stroke-dasharray="5 2"/><path d="M20 7 V19 M14 13 H26" stroke-width="1.6"/><path d="M18 8 L20 6 L22 8 M18 18 L20 20 L22 18 M15 11 L13 13 L15 15 M25 11 L27 13 L25 15" stroke-width="1.6"/></g>
<path d="M27 130 L30 130 L30 133z M10 155 L10 152 L13 155z" fill="#c8c8c8"/>
</svg>

<!-- ===== tilemap focus overlay ===== -->
<div class="a" style="left:1129px;top:369px;width:176px;height:49px;background:rgba(12,12,12,0.92);border-radius:4px"></div>
<div class="a" style="left:1136px;top:376px;width:20px;height:1px;background:#9a9a9a"></div>
<div class="a" style="left:1136px;top:380px;width:20px;height:1px;background:#9a9a9a"></div>
<div class="t" style="left:1163px;top:370px;font-size:15.5px;letter-spacing:0.35px;line-height:17px;color:#b8b8b8">Tilemap Focus</div>
<div class="t" style="left:1136px;top:393px;font-size:15.5px;letter-spacing:0.35px;line-height:17px;color:#d4d4d4">Focus On</div>
<div class="a" style="left:1209px;top:389px;width:90px;height:25px;background:#5e5e5e;border-radius:3px"></div>
<div class="a" style="left:1215px;top:393px;width:16px;height:15px;border:1.5px dashed #d8d8d8"></div>
<div class="t" style="left:1237px;top:393px;font-size:15.5px;letter-spacing:0.35px;line-height:17px;color:#d4d4d4">None</div>
<svg class="a" style="left:1280px;top:397px" width="12" height="8"><path d="M0 0 H11 L5.5 7z" fill="#d8d8d8"/></svg>

<!-- ===== game tab bar ===== -->
<svg class="a" style="left:65px;top:429px" width="19" height="12"><path d="M4 1 H15 A4.5 4.5 0 0 1 15 11 H4 A4.5 4.5 0 0 1 4 1z" fill="#c8c8c8"/><path d="M3 6 H7 M5 4 V8" stroke="#3c3c3c" stroke-width="1.2"/><circle cx="13" cy="7" r="1" fill="#3c3c3c"/><circle cx="15" cy="5" r="1" fill="#3c3c3c"/></svg>
<div class="t" style="left:86px;top:427px;font-size:15.5px;letter-spacing:0.35px;line-height:17px;color:#d2d2d2">Game</div>
<svg class="a" style="left:160px;top:428px" width="16" height="16"><circle cx="7.5" cy="7.5" r="7.3" fill="#c8c8c8"/><path d="M7.5 3 V8 H11" stroke="#282828" stroke-width="1.6" fill="none"/></svg>
<div class="t" style="left:180px;top:427px;font-size:15.5px;letter-spacing:0.35px;line-height:17px;color:#c8c8c8">Animation</div>
<svg class="a" style="left:1288px;top:428px" width="6" height="14"><circle cx="3" cy="2" r="1.5" fill="#d0d0d0"/><circle cx="3" cy="6.5" r="1.5" fill="#d0d0d0"/><circle cx="3" cy="11" r="1.5" fill="#d0d0d0"/></svg>

<!-- ===== game toolbar ===== -->
<div class="t" style="left:61px;top:452px;font-size:15.5px;letter-spacing:0.35px;line-height:17px;color:#c8c8c8">Game</div>
<svg class="a" style="left:152px;top:456px" width="12" height="8"><path d="M0 0 H11 L5.5 7z" fill="#c8c8c8"/></svg>
<div class="a" style="left:169px;top:447px;width:1px;height:25px;background:#2a2a2a"></div>
<div class="t" style="left:181px;top:452px;font-size:15.5px;letter-spacing:0.35px;line-height:17px;color:#c8c8c8">Display 1</div>
<svg class="a" style="left:259px;top:456px" width="12" height="8"><path d="M0 0 H11 L5.5 7z" fill="#c8c8c8"/></svg>
<div class="a" style="left:276px;top:447px;width:1px;height:25px;background:#2a2a2a"></div>
<div class="t" style="left:281px;top:452px;font-size:15.5px;letter-spacing:0.35px;line-height:17px;color:#c8c8c8">Full HD (1920x1080)</div>
<svg class="a" style="left:459px;top:456px" width="12" height="8"><path d="M0 0 H11 L5.5 7z" fill="#c8c8c8"/></svg>
<div class="a" style="left:476px;top:447px;width:1px;height:25px;background:#2a2a2a"></div>
<div class="t" style="left:485px;top:453px;font-size:15.5px;letter-spacing:0.35px;line-height:17px;color:#c8c8c8">Scale</div>
<div class="a" style="left:538px;top:460px;width:183px;height:2px;background:#5e5e5e"></div>
<div class="a" style="left:533px;top:455px;width:12px;height:12px;background:#999;border-radius:50%"></div>
<div class="t" style="left:728px;top:453px;font-size:15.5px;letter-spacing:0.35px;line-height:17px;color:#c8c8c8">0.65x</div>
<div class="a" style="left:857px;top:447px;width:1px;height:25px;background:#2a2a2a"></div>
<div class="t" style="left:862px;top:452px;font-size:15.5px;letter-spacing:0.35px;line-height:17px;color:#c8c8c8">Play Focused</div>
<svg class="a" style="left:978px;top:456px" width="12" height="8"><path d="M0 0 H11 L5.5 7z" fill="#c8c8c8"/></svg>
<div class="a" style="left:995px;top:447px;width:1px;height:25px;background:#2a2a2a"></div>
<svg class="a" style="left:1001px;top:450px" width="20" height="20"><ellipse cx="10" cy="11.5" rx="5.5" ry="6.5" fill="#bdbdbd"/><circle cx="10" cy="5" r="3" fill="#bdbdbd"/><path d="M2 8 L5 10 M18 8 L15 10 M2 13 H5 M18 13 H15 M3 18 L5.5 16 M17 18 L14.5 16 M7 2 L8 4 M13 2 L12 4" stroke="#bdbdbd" stroke-width="1.3"/><path d="M10 7 V17" stroke="#3c3c3c" stroke-width="0.8"/></svg>
<div class="a" style="left:1027px;top:447px;width:1px;height:25px;background:#2a2a2a"></div>
<div class="a" style="left:1028px;top:447px;width:78px;height:25px;background:#383838"></div>
<div class="a" style="left:1106px;top:447px;width:1px;height:25px;background:#2a2a2a"></div>
<svg class="a" style="left:1113px;top:452px" width="18" height="14"><path d="M1 4.5 H4 L8 1 V13 L4 9.5 H1z" fill="#d0d0d0"/><path d="M10.5 4 Q12 7 10.5 10 M13 2.5 Q15.5 7 13 11.5" stroke="#d0d0d0" stroke-width="1.3" fill="none"/></svg>
<div class="a" style="left:1137px;top:447px;width:1px;height:25px;background:#2a2a2a"></div>
<svg class="a" style="left:1143px;top:452px" width="20" height="14"><rect x="1" y="1" width="18" height="12" fill="none" stroke="#d0d0d0" stroke-width="1.3"/><path d="M1 5 H19 M1 9 H19 M5 1 V9 M9 1 V9 M13 1 V9 M17 1 V9 M5 9 V13 M15 9 V13" stroke="#d0d0d0" stroke-width="1"/></svg>
<div class="a" style="left:1170px;top:447px;width:1px;height:25px;background:#2a2a2a"></div>
<div class="t" style="left:1176px;top:452px;font-size:15.5px;letter-spacing:0.35px;line-height:17px;color:#c8c8c8">Stats</div>
<div class="a" style="left:1220px;top:447px;width:1px;height:25px;background:#2a2a2a"></div>
<div class="t" style="left:1225px;top:452px;font-size:15.5px;letter-spacing:0.35px;line-height:17px;color:#c8c8c8">Gizmos</div>
<div class="a" style="left:1286px;top:452px;width:1px;height:15px;background:#2a2a2a"></div>
<svg class="a" style="left:1292px;top:456px" width="12" height="8"><path d="M0 0 H11 L5.5 7z" fill="#c8c8c8"/></svg>

<!-- ===== left panel items ===== -->
<svg class="a" style="left:36px;top:17px" width="6" height="14"><circle cx="3" cy="2" r="1.5" fill="#d0d0d0"/><circle cx="3" cy="6.5" r="1.5" fill="#d0d0d0"/><circle cx="3" cy="11" r="1.5" fill="#d0d0d0"/></svg>
<svg class="a" style="left:28px;top:0" width="20" height="10"><rect x="4" y="2" width="5" height="5" fill="none" stroke="#aaa" stroke-width="1.1"/><path d="M8 5 L14 -1 H11 M14 -1 V2" stroke="#aaa" stroke-width="1.1" fill="none"/></svg>
<svg class="a" style="left:10px;top:621px" width="14" height="14"><path d="M3 6 V3 A3 3 0 0 1 9 3" stroke="#d0d0d0" stroke-width="1.3" fill="none"/><rect x="1.5" y="6.5" width="9" height="6" fill="none" stroke="#d0d0d0" stroke-width="1.3"/></svg>
<svg class="a" style="left:34px;top:621px" width="6" height="14"><circle cx="3" cy="2" r="1.5" fill="#d0d0d0"/><circle cx="3" cy="6.5" r="1.5" fill="#d0d0d0"/><circle cx="3" cy="11" r="1.5" fill="#d0d0d0"/></svg>
<svg class="a" style="left:11px;top:648px" width="20" height="12"><ellipse cx="9" cy="6" rx="8.5" ry="5" fill="none" stroke="#6a6a6a" stroke-width="1.3"/><circle cx="9" cy="5.5" r="3.2" fill="#6a6a6a"/></svg>
<div class="t" style="left:30px;top:646px;font-size:15.5px;letter-spacing:0.35px;line-height:17px;color:#d8d8d8">21</div>
<svg class="a" style="left:0;top:711px" width="24" height="72"><path d="M-20 0 H7 L23 16 V68 Q23 71 20 71 H-20z" fill="#ececec"/><g fill="#2e6b2e"><rect x="1.5" y="16" width="4" height="30" transform="skewX(-6)"/><rect x="-2" y="25.5" width="12" height="4.2"/><rect x="-2" y="36" width="12" height="4.2"/></g></svg>
<div class="t" style="left:-1.5px;top:789px;font-size:13.5px;line-height:15px;color:#c8c8c8">Anim</div>
<svg class="a" style="left:0;top:827px" width="24" height="72"><path d="M-20 0 H7 L23 16 V68 Q23 71 20 71 H-20z" fill="#ececec"/><g fill="#2e6b2e"><rect x="1.5" y="16" width="4" height="30" transform="skewX(-6)"/><rect x="-2" y="25.5" width="12" height="4.2"/><rect x="-2" y="36" width="12" height="4.2"/></g></svg>
<div class="t" style="left:-2px;top:906px;font-size:13.5px;line-height:15px;color:#c8c8c8">ton...</div>
<div class="a" style="left:-2px;top:1205px;width:14px;height:14px;background:#9a9a9a;border-radius:50%"></div>

<svg class="a" style="left:470px;top:710px" width="90" height="65">
<g fill="none" stroke="#fff" stroke-width="1.4" stroke-dasharray="2.2 1.2">
<path d="M38 8 H48 L53 15 V34 L48 41 H38 L33 34 V15 Z"/>
<path d="M15 45 H33 L40 51 V63 L33 69 H15 L8 63 V51 Z" transform="translate(0,-8)"/>
<path d="M54 45 H72 L79 51 V63 L72 69 H54 L47 63 V51 Z" transform="translate(0,-8)"/>
</g>
<path d="M42.5 11 L49.5 18 V24 H46 V33.5 H39 V24 H35.5 V18 Z" fill="#ec9340" stroke="#1a1a2a" stroke-width="1.4"/>
<path d="M10.5 46 L17.5 39 H23 V42.5 H33.5 V49.5 H23 V53 H17.5 Z" fill="#ec9340" stroke="#1a1a2a" stroke-width="1.4"/>
<path d="M74 46 L67 39 H61.5 V42.5 H51 V49.5 H61.5 V53 H67 Z" fill="#ec9340" stroke="#1a1a2a" stroke-width="1.4"/>
</svg>

</body></html>
